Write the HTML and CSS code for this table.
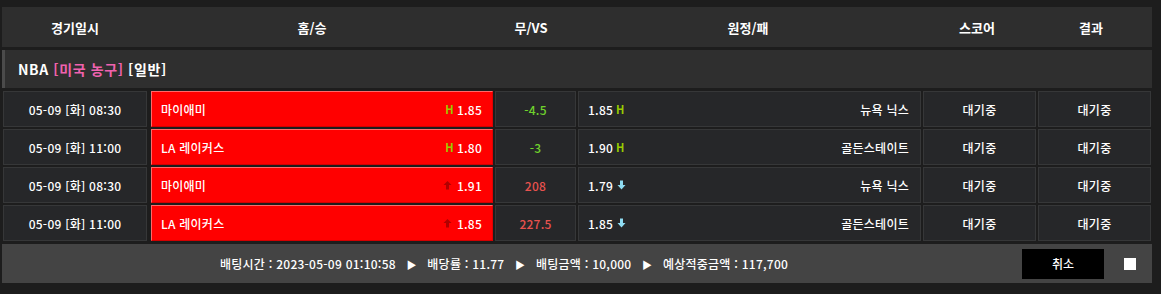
FILE: index.html
```html
<!DOCTYPE html>
<html lang="ko">
<head>
<meta charset="utf-8">
<link rel="stylesheet" href="styles.css">
</head>
<body>
<div class="board">
  <div class="thead">
    <div class="th c-date">경기일시</div>
    <div class="th c-home">홈/승</div>
    <div class="th c-mid">무/VS</div>
    <div class="th c-away">원정/패</div>
    <div class="th c-score">스코어</div>
    <div class="th c-result">결과</div>
  </div>
  <div class="league">NBA <span class="pink">[미국 농구]</span> [일반]</div>
  <div class="rows">
    <div class="row">
      <div class="cell date">05-09 [화] 08:30</div>
      <div class="cell home"><span>마이애미</span><span class="odds"><b class="h">H</b>1.85</span></div>
      <div class="cell mid green">-4.5</div>
      <div class="cell away"><span class="odds">1.85<b class="h">H</b></span><span>뉴욕 닉스</span></div>
      <div class="cell score">대기중</div>
      <div class="cell result">대기중</div>
    </div>
    <div class="row">
      <div class="cell date">05-09 [화] 11:00</div>
      <div class="cell home"><span>LA 레이커스</span><span class="odds"><b class="h">H</b>1.80</span></div>
      <div class="cell mid green">-3</div>
      <div class="cell away"><span class="odds">1.90<b class="h">H</b></span><span>골든스테이트</span></div>
      <div class="cell score">대기중</div>
      <div class="cell result">대기중</div>
    </div>
    <div class="row">
      <div class="cell date">05-09 [화] 08:30</div>
      <div class="cell home"><span>마이애미</span><span class="odds"><svg class="arr" width="9" height="10" viewBox="0 0 9 10"><path d="M4.5 1 L8.5 5 L6 5 L6 9.5 L3 9.5 L3 5 L0.5 5 Z" fill="#b00000"/></svg>1.91</span></div>
      <div class="cell mid red">208</div>
      <div class="cell away"><span class="odds">1.79<svg class="arr" width="9" height="10" viewBox="0 0 9 10"><path d="M4.5 9.5 L8.5 5 L6 5 L6 0.5 L3 0.5 L3 5 L0.5 5 Z" fill="#8fdcf2"/></svg></span><span>뉴욕 닉스</span></div>
      <div class="cell score">대기중</div>
      <div class="cell result">대기중</div>
    </div>
    <div class="row">
      <div class="cell date">05-09 [화] 11:00</div>
      <div class="cell home"><span>LA 레이커스</span><span class="odds"><svg class="arr" width="9" height="10" viewBox="0 0 9 10"><path d="M4.5 1 L8.5 5 L6 5 L6 9.5 L3 9.5 L3 5 L0.5 5 Z" fill="#b00000"/></svg>1.85</span></div>
      <div class="cell mid red">227.5</div>
      <div class="cell away"><span class="odds">1.85<svg class="arr" width="9" height="10" viewBox="0 0 9 10"><path d="M4.5 9.5 L8.5 5 L6 5 L6 0.5 L3 0.5 L3 5 L0.5 5 Z" fill="#8fdcf2"/></svg></span><span>골든스테이트</span></div>
      <div class="cell score">대기중</div>
      <div class="cell result">대기중</div>
    </div>
  </div>
  <div class="footer">
    <div class="summary">배팅시간 : 2023-05-09 01:10:58 <span class="tri">▶</span> 배당률 : 11.77 <span class="tri">▶</span> 배팅금액 : 10,000 <span class="tri">▶</span> 예상적중금액 : 117,700</div>
    <button class="cancel">취소</button>
    <span class="check"></span>
  </div>
</div>
</body>
</html>
```

FILE: styles.css
```css
html, body {
  margin: 0;
  padding: 0;
  background: #1d1d1d;
}
body {
  font-family: "Noto Sans CJK KR", "Liberation Sans", sans-serif;
  color: #ffffff;
  font-size: 12px;
}
.board {
  width: 1150px;
  padding: 7px 0 0 2px;
}
.thead {
  display: grid;
  grid-template-columns: 146px 328px 110px 324px 134px 94px;
  height: 40px;
  background: #2e2e2e;
  align-items: center;
}
.th {
  text-align: center;
  font-weight: 700;
  font-size: 13px;
}
.league {
  margin-top: 3px;
  height: 38px;
  background: #2f2f2f;
  border-left: 3px solid #4b4b4b;
  padding-left: 13px;
  display: flex;
  align-items: center;
  font-weight: 700;
  font-size: 14px;
  letter-spacing: 0.6px;
  box-sizing: border-box;
  white-space: pre;
}
.pink { color: #f062ae; }
.rows {
  margin-top: 3px;
  padding-left: 1px;
  display: flex;
  flex-direction: column;
  gap: 2px;
  letter-spacing: 0.25px;
}
.row {
  display: grid;
  grid-template-columns: 145px 343px 81px 343px 113px 113px;
  column-gap: 2px;
  height: 36px;
}
.row .date { margin-right: 1px; }
.cell {
  box-sizing: border-box;
  background: #262729;
  border: 1px solid #363738;
  display: flex;
  align-items: center;
  justify-content: center;
  font-weight: 500;
}
.home {
  background: #ff0000;
  border: 1px solid #ff6a6a;
  border-bottom-color: #d40000;
  border-right-color: #e00000;
  justify-content: space-between;
  padding: 0 10px 0 9px;
  margin-left: 1px;
}
.away {
  justify-content: space-between;
  padding: 0 11px 0 9px;
}
.odds {
  display: flex;
  align-items: center;
}
.h {
  color: #99cc00;
  font-weight: 700;
  font-size: 11px;
  margin: 0 3px;
}
.home .h { margin: 0 3px 0 0; }
.arr { margin: 0 4px; }
.home .arr { margin: 0 5px 0 0; }
.green { color: #6fd22c; }
.red { color: #e8524e; }
.footer {
  margin-top: 3px;
  height: 39px;
  background: #444444;
  display: flex;
  align-items: center;
}
.summary {
  margin-left: 218px;
  width: 800px;
  font-weight: 500;
  letter-spacing: 0.25px;
  white-space: pre;
}
.tri {
  font-size: 10px;
  margin: 0 7px;
}
.cancel {
  margin-left: 2px;
  width: 82px;
  height: 30px;
  background: #000000;
  color: #ffffff;
  border: 0;
  font-family: inherit;
  font-size: 12px;
  font-weight: 500;
}
.check {
  margin-left: 20px;
  width: 12px;
  height: 12px;
  background: #ffffff;
}
```
